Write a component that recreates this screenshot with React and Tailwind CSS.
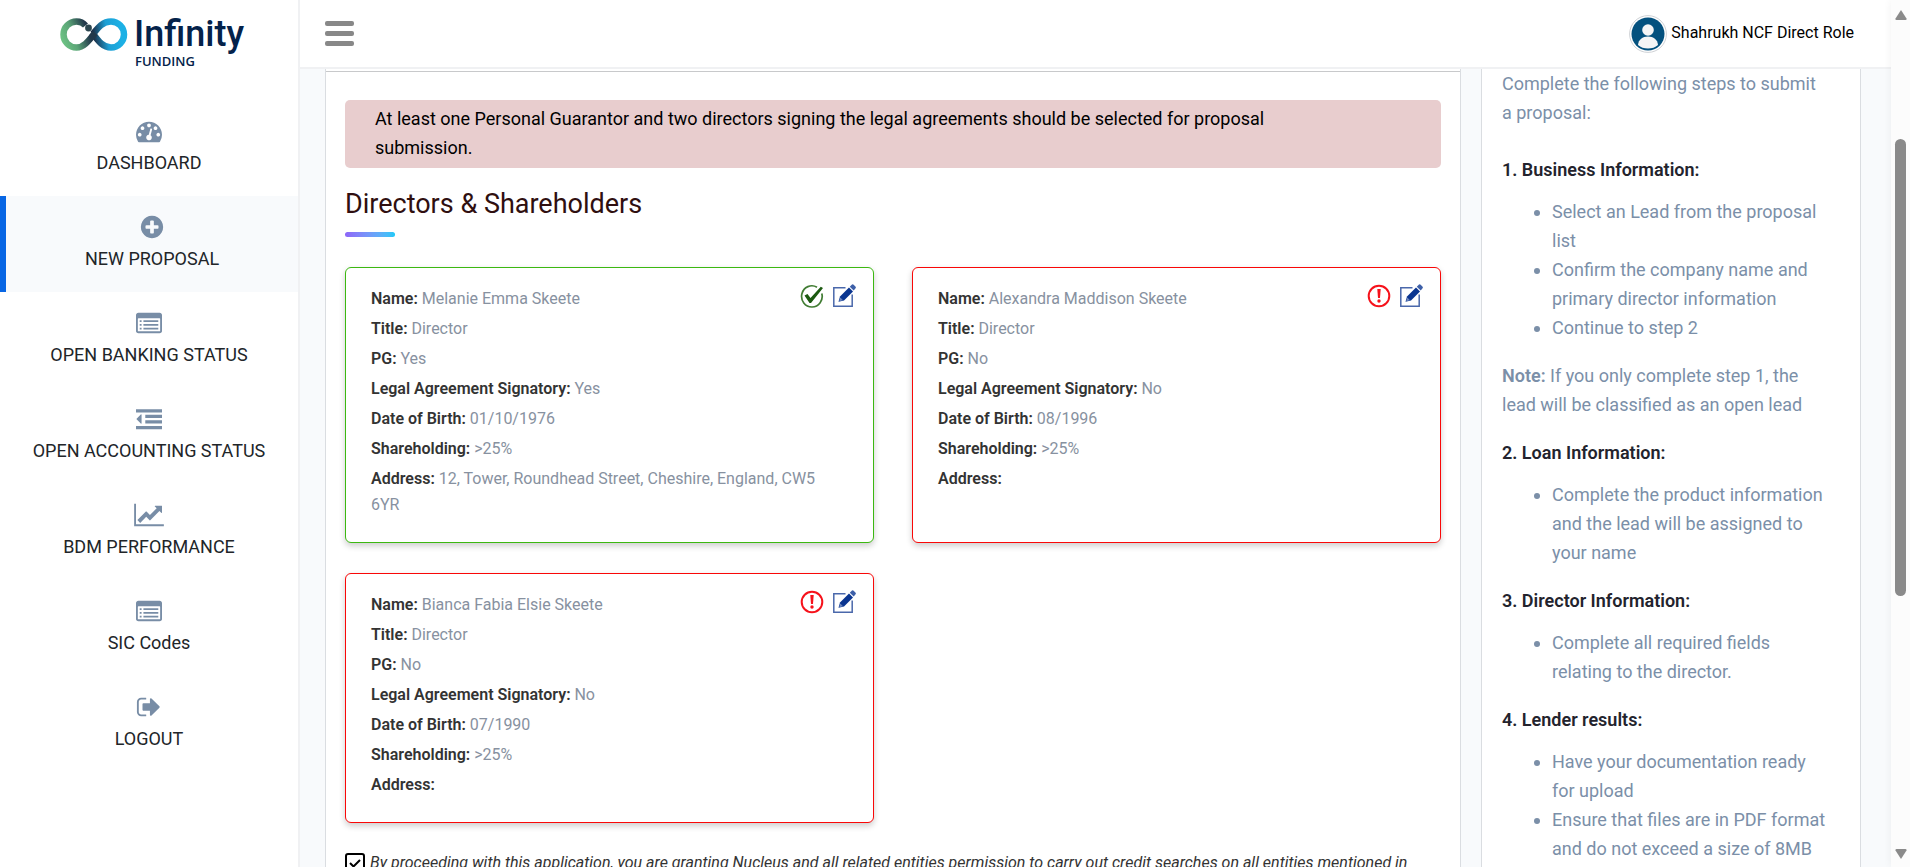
import React from "react";

function Icon({ width = 26, box = "0 0 1792 1792", children }) {
  return (
    <svg width={width} height="26" viewBox={box} fill="currentColor" aria-hidden="true">
      {children}
    </svg>
  );
}

const DashboardIcon = () => (
  <Icon>
    <path d="M384 1152q0-53-37.5-90.5t-90.5-37.5-90.5 37.5-37.5 90.5 37.5 90.5 90.5 37.5 90.5-37.5 37.5-90.5zm192-448q0-53-37.5-90.5t-90.5-37.5-90.5 37.5-37.5 90.5 37.5 90.5 90.5 37.5 90.5-37.5 37.5-90.5zm428 481l101-382q6-26-7.5-48.5t-38.5-29.5-48 6.5-30 39.5l-101 382q-60 5-107 43.5t-63 98.5q-20 77 20 146t117 89 146-20 89-117q16-60-6-117t-72-91zm660-33q0-53-37.5-90.5t-90.5-37.5-90.5 37.5-37.5 90.5 37.5 90.5 90.5 37.5 90.5-37.5 37.5-90.5zm-640-640q0-53-37.5-90.5t-90.5-37.5-90.5 37.5-37.5 90.5 37.5 90.5 90.5 37.5 90.5-37.5 37.5-90.5zm448 192q0-53-37.5-90.5t-90.5-37.5-90.5 37.5-37.5 90.5 37.5 90.5 90.5 37.5 90.5-37.5 37.5-90.5zm320 448q0 261-141 483-19 29-54 29h-1402q-35 0-54-29-141-221-141-483 0-182 71-348t191-286 286-191 348-71 348 71 286 191 191 286 71 348z" />
  </Icon>
);

const PlusCircleIcon = () => (
  <Icon>
    <path d="M1344 960v-128q0-26-19-45t-45-19h-256v-256q0-26-19-45t-45-19h-128q-26 0-45 19t-19 45v256h-256q-26 0-45 19t-19 45v128q0 26 19 45t45 19h256v256q0 26 19 45t45 19h128q26 0 45-19t19-45v-256h256q26 0 45-19t19-45zm320-64q0 209-103 385.5t-279.5 279.5-385.5 103-385.5-103-279.5-279.5-103-385.5 103-385.5 279.5-279.5 385.5-103 385.5 103 279.5 279.5 103 385.5z" />
  </Icon>
);

const ListIcon = () => (
  <Icon>
    <path
      fillRule="evenodd"
      d="M160 192h1472q66 0 113 47t47 113v1088q0 66-47 113t-113 47h-1472q-66 0-113-47t-47-113v-1088q0-66 47-113t113-47zm-32 416v832q0 32 32 32h1472q32 0 32-32v-832q0-32-32-32h-1472q-32 0-32 32z"
    />
    <path d="M256 704h128v128h-128zM256 960h128v128h-128zM256 1216h128v128h-128zM512 704h1024v128h-1024zM512 960h1024v128h-1024zM512 1216h1024v128h-1024z" />
  </Icon>
);

const OutdentIcon = () => (
  <Icon>
    <path d="M384 608v576q0 13-9.500 22.500t-22.500 9.500q-14 0-23-9l-288-288q-9-9-9-23t9-23l288-288q9-9 23-9 13 0 22.500 9.500t9.500 22.500zM0 224h1792v224h-1792zM640 608h1152v224h-1152zM640 976h1152v224h-1152zM0 1376h1792v224h-1792z" />
  </Icon>
);

const LineChartIcon = () => (
  <Icon width={30} box="0 0 2048 1792">
    <path d="M2048 1536v128h-2048v-1536h128v1408h1920zm-128-1248v435q0 21-19.500 29.500t-35.500-7.500l-121-121-633 633q-10 10-23 10t-23-10l-233-233-416 416-192-192 585-585q10-10 23-10t23 10l233 233 464-464-121-121q-16-16-7.500-35.500t29.500-19.500h435q14 0 23 9t9 23z" />
  </Icon>
);

const SignOutIcon = () => (
  <Icon>
    <path d="M704 1440q0 4 1 20t.5 26.500-3 23.500-10 19.500-20.500 6.500h-320q-119 0-203.500-84.500t-84.500-203.500v-704q0-119 84.500-203.500t203.500-84.500h320q13 0 22.500 9.500t9.500 22.500q0 4 1 20t.5 26.500-3 23.500-10 19.500-20.500 6.500h-320q-66 0-113 47t-47 113v704q0 66 47 113t113 47h312l11.500 1 11.500 3 8 5.500 7 9 2 13.500zm928-544q0 26-19 45l-544 544q-19 19-45 19t-45-19-19-45v-288h-448q-26 0-45-19t-19-45v-384q0-26 19-45t45-19h448v-288q0-26 19-45t45-19 45 19l544 544q19 19 19 45z" />
  </Icon>
);

const NAV = [
  { label: "DASHBOARD", icon: DashboardIcon },
  { label: "NEW PROPOSAL", icon: PlusCircleIcon, active: true },
  { label: "OPEN BANKING STATUS", icon: ListIcon },
  { label: "OPEN ACCOUNTING STATUS", icon: OutdentIcon },
  { label: "BDM PERFORMANCE", icon: LineChartIcon },
  { label: "SIC Codes", icon: ListIcon },
  { label: "LOGOUT", icon: SignOutIcon },
];

function Logo() {
  return (
    <a href="#home" className="flex h-[100px] items-start pt-[14px] pl-[59px] text-[#04224a]">
      <svg width="70" height="36" viewBox="0 0 70 36" className="mt-[2px] shrink-0" fill="none" aria-hidden="true">
        <defs>
          <linearGradient id="loopGreen" x1="4" y1="26" x2="40" y2="12" gradientUnits="userSpaceOnUse">
            <stop offset="0" stopColor="#6cc183" />
            <stop offset="0.3" stopColor="#5ba577" />
            <stop offset="0.7" stopColor="#22384b" />
          </linearGradient>
          <linearGradient id="loopBlue" x1="34" y1="20" x2="62" y2="16" gradientUnits="userSpaceOnUse">
            <stop offset="0" stopColor="#1b2c45" />
            <stop offset="0.5" stopColor="#1d9fd4" />
            <stop offset="1" stopColor="#1cb0e5" />
          </linearGradient>
        </defs>
        <path
          d="M33 16.500 C38 23 43 31.500 52 31.500 A13 13 0 0 0 52 5.500 C43 5.500 38 13 34 18"
          stroke="url(#loopBlue)"
          strokeWidth="6.500"
        />
        <path
          d="M26.500 9.500 C24 6.500 21 5.500 17.500 5.500 A13 13 0 0 0 17.500 31.500 C25 31.500 30 24.500 36 17"
          stroke="url(#loopGreen)"
          strokeWidth="6.500"
        />
        <circle cx="29.500" cy="12" r="3.400" fill="#2b454f" />
      </svg>
      <span className="ml-[5px] flex flex-col">
        <span className="text-4xl leading-[40px] font-medium">Infinity</span>
        <span className="pl-px font-['Open_Sans',sans-serif] text-[13px] leading-[14px] font-semibold">FUNDING</span>
      </span>
    </a>
  );
}

function Sidebar() {
  return (
    <aside className="w-[300px] shrink-0 border-r-2 border-[#f0f1f3] bg-white">
      <Logo />
      <nav>
        {NAV.map(({ label, icon: Glyph, active }) => (
          <a
            key={label}
            href="#nav"
            className={
              active
                ? "flex h-24 flex-col items-center gap-[5px] border-l-[6px] border-[#0866e4] bg-[#f8fafc] pt-[18px] text-lg leading-7 text-[#212529]"
                : "flex h-24 flex-col items-center gap-[5px] pt-[18px] text-lg leading-7 text-[#212529]"
            }
          >
            <span className="text-[#788da6]">
              <Glyph />
            </span>
            {label}
          </a>
        ))}
      </nav>
    </aside>
  );
}

function Header() {
  return (
    <header className="flex h-[69px] shrink-0 items-center justify-between border-b-2 border-[#f0f1f3] bg-white pr-[37px] pl-[25px]">
      <button type="button" aria-label="Toggle menu" className="flex w-[29px] flex-col gap-[5px]">
        <span className="h-[5px] rounded-xs bg-[#888888]" />
        <span className="h-[5px] rounded-xs bg-[#888888]" />
        <span className="h-[5px] rounded-xs bg-[#888888]" />
      </button>
      <a href="#profile" className="flex items-center gap-1 text-base text-black">
        <svg width="38" height="38" viewBox="0 0 38 38" aria-hidden="true">
          <circle cx="19" cy="19" r="18.400" fill="#fff" stroke="#cfd2d6" />
          <circle cx="19" cy="19" r="16.500" fill="#04517e" />
          <circle cx="19" cy="15" r="5.800" fill="#f5f5f5" />
          <path d="M9 30 C9.500 24.500 13.500 21.500 19 21.500 S28.500 24.500 29 30 Q25 33.500 19 33.500 T9 30Z" fill="#f5f5f5" />
        </svg>
        <span className="pb-[2px]">Shahrukh NCF Direct Role</span>
      </a>
    </header>
  );
}

function OkIcon() {
  return (
    <svg width="24" height="24" viewBox="0 0 24 24" fill="none" role="img" aria-label="Complete">
      <path d="M17 3.200A10.300 10.600 0 1 0 21.800 9.500" stroke="#417c33" strokeWidth="1.700" />
      <path d="M4.500 11.500 7.500 10 10.500 14 20.800 2.800 23 4 11 19 9.500 19Z" fill="#1c5a10" />
    </svg>
  );
}

function WarnIcon() {
  return (
    <svg width="24" height="24" viewBox="0 0 24 24" fill="none" role="img" aria-label="Incomplete">
      <circle cx="12" cy="12" r="10.300" stroke="#f6121b" strokeWidth="2" />
      <path d="M10.300 5h3.400l-.7 9h-2z" fill="#f6121b" />
      <circle cx="12" cy="17" r="1.700" fill="#f6121b" />
    </svg>
  );
}

function EditIcon() {
  return (
    <svg width="24" height="24" viewBox="0 0 24 24" fill="none" aria-hidden="true">
      <path d="M13.500 3.800H1.800V22.200H20.200V10.500" stroke="#4a68ab" strokeWidth="1.500" />
      <path d="M6.500 17.800 8 12.500 17 3.500 21 7.500 12 16.500Z" fill="#0a3590" />
      <path d="M17.800 2.700 20 .6Q20.800 0 21.600.7L23.600 2.700Q24.200 3.500 23.600 4.300L21.700 6.600Z" fill="#3d5fa8" />
      <path d="M8.300 13.500 11 16.200 7.200 17.200Z" fill="#6d86bd" />
    </svg>
  );
}

const DIRECTORS = [
  {
    ok: true,
    fields: [
      ["Name", "Melanie Emma Skeete"],
      ["Title", "Director"],
      ["PG", "Yes"],
      ["Legal Agreement Signatory", "Yes"],
      ["Date of Birth", "01/10/1976"],
      ["Shareholding", ">25%"],
      ["Address", "12, Tower, Roundhead Street, Cheshire, England, CW5 6YR"],
    ],
  },
  {
    ok: false,
    fields: [
      ["Name", "Alexandra Maddison Skeete"],
      ["Title", "Director"],
      ["PG", "No"],
      ["Legal Agreement Signatory", "No"],
      ["Date of Birth", "08/1996"],
      ["Shareholding", ">25%"],
      ["Address", ""],
    ],
  },
  {
    ok: false,
    fields: [
      ["Name", "Bianca Fabia Elsie Skeete"],
      ["Title", "Director"],
      ["PG", "No"],
      ["Legal Agreement Signatory", "No"],
      ["Date of Birth", "07/1990"],
      ["Shareholding", ">25%"],
      ["Address", ""],
    ],
  },
];

function DirectorCard({ ok, fields }) {
  return (
    <article
      className={
        ok
          ? "relative rounded-md border border-[#3cb811] bg-white pt-[18px] pr-9 pb-5 pl-[25px] shadow-[0_3px_6px_rgba(0,0,0,0.2)]"
          : "relative rounded-md border border-[#f90808] bg-white pt-[18px] pr-9 pb-5 pl-[25px] shadow-[0_3px_6px_rgba(0,0,0,0.2)]"
      }
    >
      <div className="absolute top-4 right-[17px] flex gap-2">
        {ok ? <OkIcon /> : <WarnIcon />}
        <button type="button" aria-label={"Edit " + fields[0][1]}>
          <EditIcon />
        </button>
      </div>
      {fields.map(([name, value]) => (
        <p key={name} className="mb-1 text-base leading-[26px] text-[#8791a0]">
          <strong className="font-semibold text-[#333333]">{name}:</strong> {value}
        </p>
      ))}
    </article>
  );
}

function Directors() {
  return (
    <section className="min-w-0 flex-1 border-x border-[#dadde1] bg-white pt-[2px]">
      <div className="border-t border-[#c8c9cb] px-[19px] pt-7">
        <div
          role="alert"
          className="rounded-[5px] bg-[#e8cdce] px-[30px] pt-1 pb-[6px] text-lg leading-[29px] text-black"
        >
          <p className="max-w-[960px]">
            At least one Personal Guarantor and two directors signing the legal agreements should be selected for
            proposal submission.
          </p>
        </div>
        <h2 className="mt-[18px] text-[27px] leading-9 text-[#2f0f10]">Directors &amp; Shareholders</h2>
        <div className="mt-[10px] h-[5px] w-[50px] rounded-full bg-linear-to-r from-[#8d65f8] to-[#17c9f8]" />
        <div className="mt-[30px] grid grid-cols-2 gap-x-[38px] gap-y-[30px]">
          {DIRECTORS.map((d) => (
            <DirectorCard key={d.fields[0][1]} {...d} />
          ))}
        </div>
        <div className="mt-[30px] flex items-start gap-[5px] text-base leading-5 text-[#333333] italic">
          <span className="grid shrink-0">
            <input
              id="consent"
              type="checkbox"
              defaultChecked
              className="peer col-start-1 row-start-1 size-5 appearance-none rounded-[3px] border-2 border-black bg-white"
            />
            <svg
              viewBox="0 0 20 20"
              className="pointer-events-none invisible col-start-1 row-start-1 size-5 peer-checked:visible"
              fill="none"
              stroke="#000"
              strokeWidth="2"
              aria-hidden="true"
            >
              <path d="M5 10 8.500 13.500 15 7" />
            </svg>
          </span>
          <label htmlFor="consent">
            By proceeding with this application, you are granting Nucleus and all related entities permission to carry
            out credit searches on all entities mentioned in
          </label>
        </div>
      </div>
    </section>
  );
}

function Steps({ title, items }) {
  return (
    <>
      <h3 className="mb-[13px] font-semibold text-[#23232d]">{title}</h3>
      <ul className="mb-[19px] list-disc pl-[50px]">
        {items.map((item) => (
          <li key={item}>{item}</li>
        ))}
      </ul>
    </>
  );
}

function Guide() {
  return (
    <aside className="w-[380px] shrink-0 border-x border-[#dadde1] bg-white pr-[31px] pl-5 text-lg leading-[29px] text-[#7b8fa8]">
      <p className="mb-7">Complete the following steps to submit a proposal:</p>
      <Steps
        title="1. Business Information:"
        items={[
          "Select an Lead from the proposal list",
          "Confirm the company name and primary director information",
          "Continue to step 2",
        ]}
      />
      <p className="mb-[19px]">
        <strong className="font-semibold">Note:</strong> If you only complete step 1, the lead will be classified as an
        open lead
      </p>
      <Steps
        title="2. Loan Information:"
        items={["Complete the product information and the lead will be assigned to your name"]}
      />
      <Steps title="3. Director Information:" items={["Complete all required fields relating to the director."]} />
      <Steps
        title="4. Lender results:"
        items={[
          "Have your documentation ready for upload",
          "Ensure that files are in PDF format and do not exceed a size of 8MB",
        ]}
      />
    </aside>
  );
}

function ScrollRail() {
  return (
    <div
      aria-hidden="true"
      className="flex w-[19px] shrink-0 flex-col items-center bg-[#fcfcfc] pt-[9px] pb-[7px] text-[#8a8a8a] shadow-[0_0_8px_rgba(0,0,0,0.06)]"
    >
      <svg width="12" height="12" viewBox="0 0 12 12" fill="currentColor">
        <path d="M6 1 11.500 9.500Q12 11 10.500 11H1.500Q0 11 .5 9.500Z" />
      </svg>
      <div className="flex w-full flex-1 flex-col items-center">
        <div className="flex-[118]" />
        <div className="w-[11px] flex-[457] rounded-full bg-[#8a8a8a]" />
        <div className="flex-[252]" />
      </div>
      <svg width="12" height="12" viewBox="0 0 12 12" fill="currentColor">
        <path d="M6 11 .5 2.500Q0 1 1.500 1H10.500Q12 1 11.500 2.500Z" />
      </svg>
    </div>
  );
}

export default function App() {
  return (
    <div className="flex h-screen overflow-hidden bg-[#f8fafc] font-[Roboto,sans-serif]">
      <Sidebar />
      <div className="flex min-w-0 flex-1 flex-col">
        <Header />
        <main className="flex min-h-0 flex-1 gap-5 overflow-hidden pr-[30px] pl-[25px]">
          <Directors />
          <Guide />
        </main>
      </div>
      <ScrollRail />
    </div>
  );
}
